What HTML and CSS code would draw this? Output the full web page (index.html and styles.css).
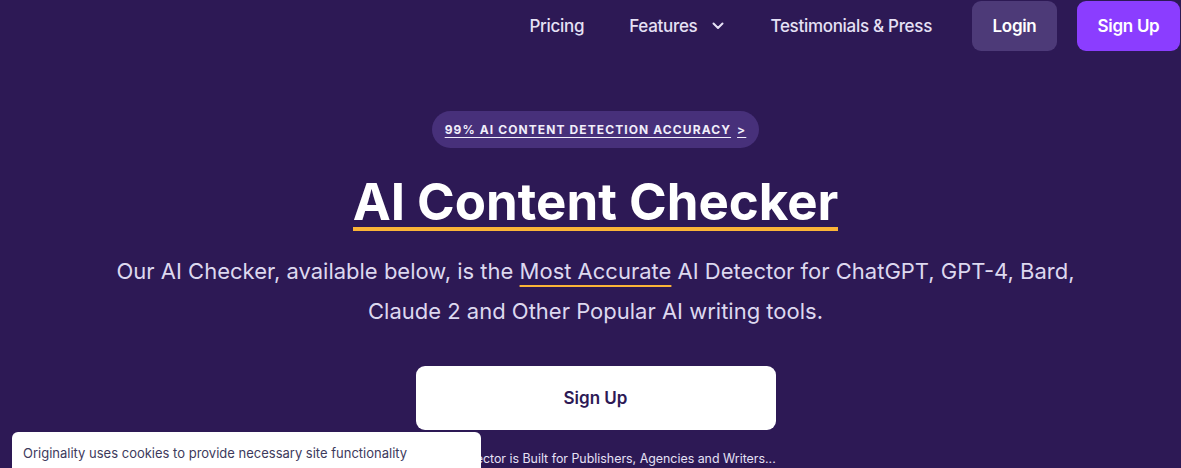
FILE: index.html
```html
<!DOCTYPE html>
<html lang="en">
<head>
<meta charset="utf-8">
<title>AI Content Checker</title>
<link rel="stylesheet" href="styles.css">
</head>
<body>
<header class="nav">
  <a class="nav-link" href="#">Pricing</a>
  <a class="nav-link nav-drop" href="#">Features
    <svg class="chev" width="12" height="8" viewBox="0 0 12 8"><path d="M1.5 1.5 L6 6 L10.5 1.5" fill="none" stroke="#e6e1f5" stroke-width="2" stroke-linecap="round" stroke-linejoin="round"/></svg>
  </a>
  <a class="nav-link nav-last" href="#">Testimonials &amp; Press</a>
  <a class="btn btn-login" href="#">Login</a>
  <a class="btn btn-signup" href="#">Sign Up</a>
</header>

<main class="hero">
  <a class="badge" href="#"><span class="badge-text">99% AI CONTENT DETECTION ACCURACY</span><span class="badge-arrow">&gt;</span></a>
  <h1 class="title">AI Content Checker</h1>
  <p class="lead">Our AI Checker, available below, is the <span class="hl">Most Accurate</span> AI Detector for ChatGPT, GPT-4, Bard,<br>Claude 2 and Other Popular AI writing tools.</p>
  <a class="cta" href="#">Sign Up</a>
  <p class="note">Our AI Detector is Built for Publishers, Agencies and Writers...</p>
</main>

<div class="cookie">Originality uses cookies to provide necessary site functionality</div>
</body>
</html>
```

FILE: styles.css
```css
html, body {
  margin: 0;
  padding: 0;
}
body {
  width: 1181px;
  height: 468px;
  overflow: hidden;
  background: #2d1955;
  font-family: "Inter", "Liberation Sans", sans-serif;
  color: #fff;
  position: relative;
}
a { text-decoration: none; color: inherit; }

.nav {
  display: flex;
  justify-content: flex-end;
  align-items: center;
  height: 52px;
  padding-right: 1px;
  box-sizing: border-box;
}
.nav-link {
  font-size: 17px;
  font-weight: 500;
  color: #e6e1f5;
  margin-right: 45px;
  display: flex;
  align-items: center;
  letter-spacing: -0.3px;
}
.nav-drop { gap: 15px; margin-right: 46px; }
.nav-last { margin-right: 40px; }
.btn {
  height: 50px;
  border-radius: 9px;
  display: flex;
  align-items: center;
  justify-content: center;
  font-size: 17px;
  font-weight: 600;
  color: #fff;
  margin-top: 1px;
  align-self: flex-start;
  letter-spacing: -0.3px;
}
.btn-login { width: 85px; background: #4d3a78; margin-right: 20px; }
.btn-signup { width: 103px; background: #8b3dff; }

.hero {
  display: flex;
  flex-direction: column;
  align-items: center;
  padding-top: 59px;
  padding-left: 10px;
}
.badge {
  display: flex;
  align-items: center;
  height: 37px;
  padding: 0 13px;
  border-radius: 19px;
  background: #47307a;
  font-size: 12px;
  font-weight: 700;
  letter-spacing: 1.1px;
  color: #f1eefa;
}
.badge-text, .badge-arrow {
  text-decoration: underline;
  text-underline-offset: 3px;
}
.badge-arrow { margin-left: 6px; }
.title {
  margin: 28px 0 0;
  font-size: 51px;
  font-weight: 700;
  line-height: 51px;
  color: #fff;
  border-bottom: 4px solid #fbb437;
  letter-spacing: 0;
}
.lead {
  margin: 20px 0 0;
  font-size: 22px;
  line-height: 40px;
  text-align: center;
  color: #ddd8ef;
}
.hl {
  text-decoration: underline;
  text-decoration-color: #fbb437;
  text-decoration-thickness: 2px;
  text-underline-offset: 6px;
}
.cta {
  margin-top: 35px;
  width: 360px;
  height: 64px;
  border-radius: 9px;
  background: #fff;
  color: #2d1955;
  font-size: 17px;
  font-weight: 600;
  display: flex;
  align-items: center;
  justify-content: center;
}
.note {
  margin: 19px 0 0;
  font-size: 12.4px;
  color: #e6e1f5;
  line-height: 20px;
}
.cookie {
  position: absolute;
  left: 12px;
  top: 432px;
  width: 469px;
  height: 36px;
  background: #fff;
  border-radius: 6px 6px 0 0;
  box-sizing: border-box;
  padding: 12px 11px 0;
  font-size: 13px;
  line-height: 18px;
  color: #3d3a5c;
  white-space: nowrap;
  overflow: hidden;
}
```
